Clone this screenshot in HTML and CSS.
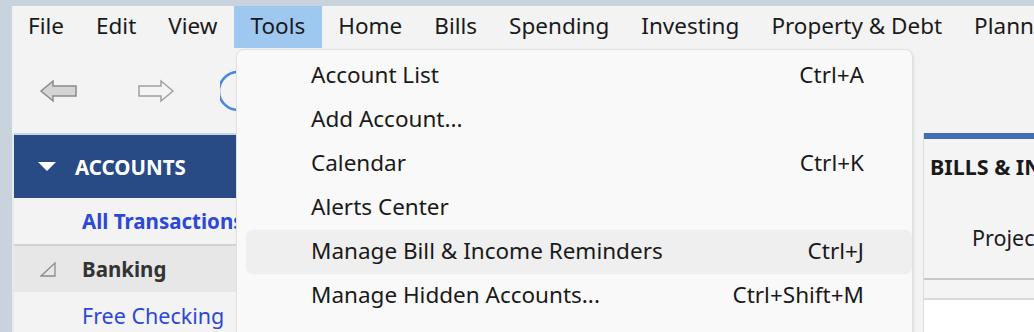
FILE: index.html
```html
<!DOCTYPE html>
<html lang="en">
<head>
    <meta charset="UTF-8">
    <title>Quicken - Tools menu</title>
    <link rel="stylesheet" href="styles.css">
</head>
<body>
    <div class="window">
        <nav class="menubar">
            <span class="menu-item">File</span>
            <span class="menu-item">Edit</span>
            <span class="menu-item">View</span>
            <span class="menu-item active">Tools</span>
            <span class="menu-item">Home</span>
            <span class="menu-item">Bills</span>
            <span class="menu-item">Spending</span>
            <span class="menu-item">Investing</span>
            <span class="menu-item">Property &amp; Debt</span>
            <span class="menu-item">Planning</span>
        </nav>

        <div class="toolbar">
            <svg class="nav-arrow" width="40" height="24" viewBox="0 0 40 24">
                <path d="M2 12 L14 2 L14 7 L37 7 L37 17 L14 17 L14 22 Z" fill="#d4d4d4" stroke="#8a8a8a" stroke-width="1.5"/>
            </svg>
            <svg class="nav-arrow" width="40" height="24" viewBox="0 0 40 24">
                <path d="M36 12 L24 2 L24 7 L2 7 L2 17 L24 17 L24 22 Z" fill="#f4f4f4" stroke="#a0a0a0" stroke-width="1.5"/>
            </svg>
            <svg class="refresh" width="30" height="44" viewBox="0 0 30 44">
                <path d="M18 3 A19 19 0 0 0 18 41" fill="none" stroke="#4a86e0" stroke-width="2.5"/>
            </svg>
        </div>

        <div class="main">
            <aside class="sidebar">
                <div class="side-header"><span class="caret"></span>ACCOUNTS</div>
                <div class="side-row link bold">All Transactions</div>
                <div class="side-row group">
                    <svg class="expander" width="16" height="15" viewBox="0 0 16 15">
                        <path d="M1 14 L15 1 L15 14 Z" fill="none" stroke="#8c8c8c" stroke-width="1.3"/>
                    </svg>
                    Banking
                </div>
                <div class="side-row link">Free Checking</div>
            </aside>
            <div class="content"></div>
            <section class="panel">
                <div class="panel-bar"></div>
                <div class="panel-title">BILLS &amp; INCOME</div>
                <div class="panel-tab">Projected Balances</div>
                <div class="panel-strip"></div>
                <div class="panel-body"></div>
            </section>
        </div>

        <div class="dropdown">
            <div class="drop-item"><span>Account List</span><span class="key">Ctrl+A</span></div>
            <div class="drop-item"><span>Add Account...</span><span class="key"></span></div>
            <div class="drop-item"><span>Calendar</span><span class="key">Ctrl+K</span></div>
            <div class="drop-item"><span>Alerts Center</span><span class="key"></span></div>
            <div class="drop-item hover"><span>Manage Bill &amp; Income Reminders</span><span class="key">Ctrl+J</span></div>
            <div class="drop-item"><span>Manage Hidden Accounts...</span><span class="key">Ctrl+Shift+M</span></div>
            <div class="separator"></div>
        </div>
    </div>
</body>
</html>
```

FILE: styles.css
```css
body {
    margin: 0;
    background-color: #c9d3de;
    font-family: "Noto Sans", "Open Sans", sans-serif;
    color: #1a1a1a;
    overflow: hidden;
}
.window {
    position: relative;
    margin: 6px 0 0 12px;
    height: 326px;
    background-color: #f3f3f3;
    overflow: hidden;
}
.menubar {
    display: flex;
    height: 42px;
    font-size: 22.5px;
    white-space: nowrap;
    overflow: hidden;
}
.menu-item {
    padding: 0 16px;
    line-height: 40px;
}
.menu-item.active {
    background-color: #9fc8f1;
    padding: 0 17px;
}
.toolbar {
    display: flex;
    align-items: center;
    height: 85px;
    padding-left: 27px;
}
.nav-arrow {
    margin-right: 58px;
}
.refresh {
    margin-left: -15px;
}
.main {
    display: flex;
    height: 199px;
    overflow: hidden;
}
.sidebar {
    width: 222px;
    flex-shrink: 0;
    border-left: 2px solid #e6e9ee;
    font-size: 21.5px;
    overflow: hidden;
}
.side-header {
    display: flex;
    align-items: center;
    height: 65px;
    background-color: #284b86;
    border-top: 2px solid #c9d5e6;
    color: white;
    font-weight: bold;
    font-size: 20.5px;
    padding-left: 24px;
    box-sizing: border-box;
}
.caret {
    width: 0;
    height: 0;
    border-left: 9px solid transparent;
    border-right: 9px solid transparent;
    border-top: 9px solid white;
    margin-right: 19px;
}
.side-row {
    display: flex;
    align-items: center;
    height: 46px;
    padding-left: 68px;
    white-space: nowrap;
}
.link {
    color: #2b48d8;
}
.bold {
    font-weight: bold;
    font-size: 20.5px;
    border-bottom: 2px solid #d2d2d2;
}
.group {
    background-color: #e7e7e7;
    font-weight: bold;
    font-size: 20.5px;
    color: #333;
    padding-left: 26px;
}
.expander {
    margin-right: 26px;
}
.content {
    flex: 1;
}
.panel {
    width: 110px;
    flex-shrink: 0;
    border-left: 1px solid #dddddd;
    background-color: #f4f4f4;
    white-space: nowrap;
    overflow: hidden;
}
.panel-bar {
    height: 6px;
    background-color: #3c6fb3;
}
.panel-title {
    padding: 13px 0 0 6px;
    height: 44px;
    box-sizing: border-box;
    font-weight: bold;
    font-size: 21.5px;
}
.panel-tab {
    padding: 36px 0 0 48px;
    height: 97px;
    box-sizing: border-box;
    font-size: 21.5px;
    line-height: 38px;
    border-bottom: 2px solid #c8c8c8;
}
.panel-strip {
    height: 18px;
    border-bottom: 2px solid #d8d8d8;
}
.panel-body {
    height: 40px;
    background-color: white;
}
.dropdown {
    position: absolute;
    left: 224px;
    top: 43px;
    width: 677px;
    height: 300px;
    background-color: #f9f9f9;
    border: 1px solid #e1e1e1;
    border-radius: 8px;
    box-shadow: 1px 1px 3px rgba(0, 0, 0, 0.08);
    padding: 4px 0 0 9px;
    box-sizing: border-box;
    font-size: 22.5px;
}
.drop-item {
    display: flex;
    justify-content: space-between;
    align-items: center;
    width: 666px;
    height: 44px;
    padding: 0 48px 3px 65px;
    box-sizing: border-box;
    border-radius: 6px;
}
.drop-item.hover {
    background-color: #efefef;
}
.separator {
    height: 2px;
    background-color: #d8d8d8;
    margin: 14px 15px 0 6px;
}
```
